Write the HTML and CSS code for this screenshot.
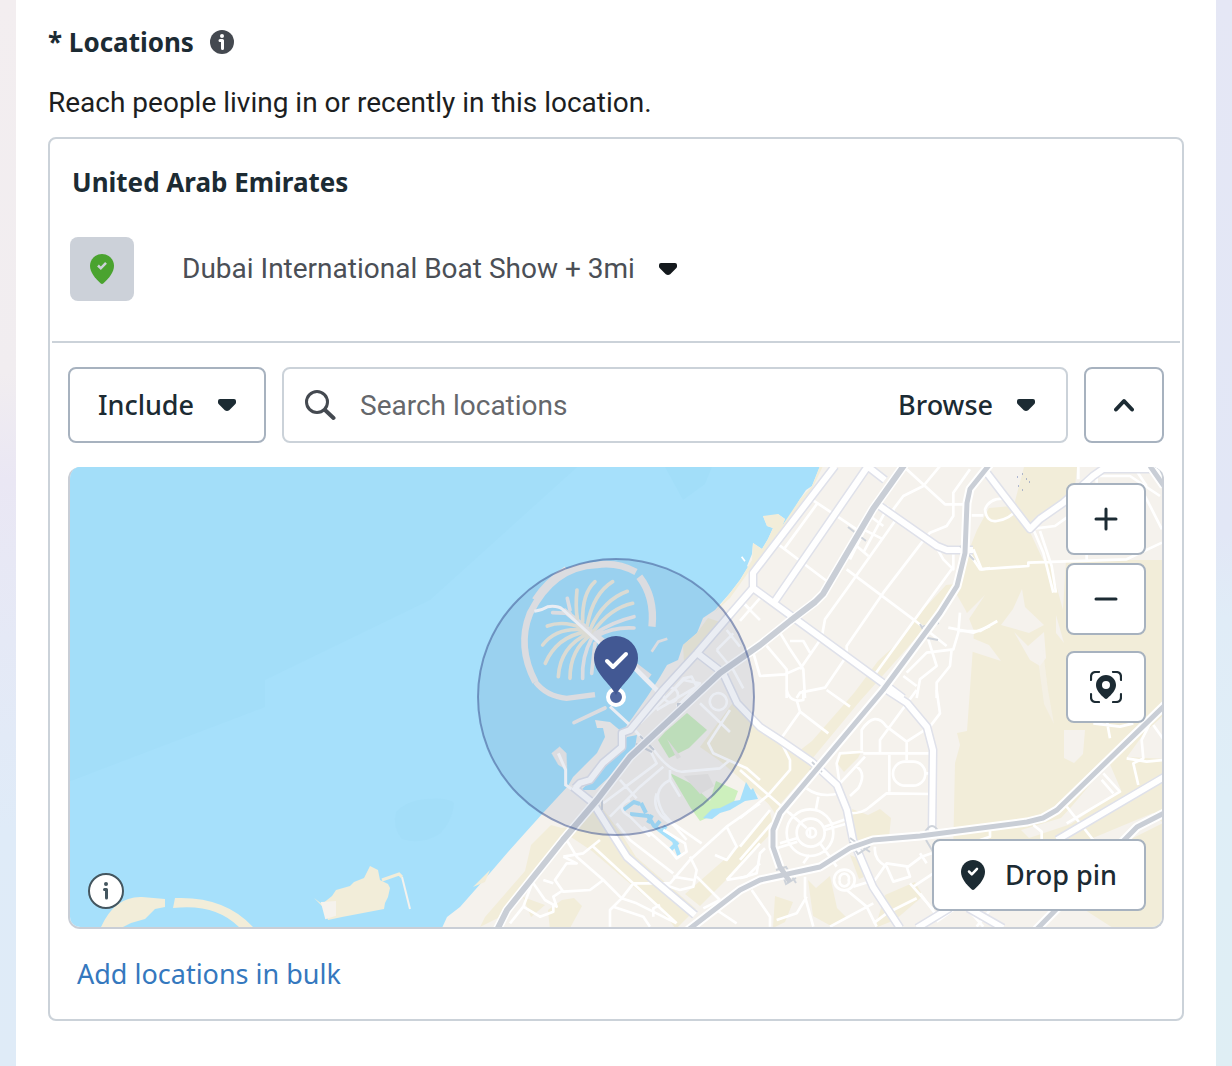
FILE: index.html
```html
<!DOCTYPE html>
<html lang="en">
<head>
<meta charset="utf-8">
<meta name="viewport" content="width=device-width, initial-scale=1">
<title>Locations</title>
<link rel="stylesheet" href="styles.css">
</head>
<body>
<main class="panel">
  <header class="heading">
    <h1 class="title">* Locations</h1>
    <button class="hint" type="button" aria-label="About locations">
      <svg width="24" height="24" viewBox="0 0 24 24" aria-hidden="true"><circle cx="12" cy="12" r="12" fill="#444950"/><circle cx="12" cy="6" r="2" fill="#fff"/><path d="M10 10.500h2.500v8" fill="none" stroke="#fff" stroke-width="3" stroke-linecap="round" stroke-linejoin="round"/></svg>
    </button>
  </header>
  <p class="intro">Reach people living in or recently in this location.</p>

  <section class="card">
    <div class="selected">
      <h2 class="country">United Arab Emirates</h2>
      <div class="place">
        <span class="place-mark">
          <svg width="24" height="30" viewBox="0 0 24 30" aria-hidden="true"><path d="M12 0C5.300 0 0 5.200 0 11.800 0 18.500 5 24 10.500 29.300q1.500 1.300 3 0C19 24 24 18.500 24 11.800 24 5.200 18.700 0 12 0z" fill="#4aa32f"/><path d="M8 11.500l2.800 2.800 5.200-5.500" fill="none" stroke="#ccd1d9" stroke-width="2.500"/></svg>
        </span>
        <button class="place-name" type="button">Dubai International Boat Show + 3mi
          <svg width="18" height="12" viewBox="0 0 18 12" aria-hidden="true"><path d="M2 0h14q2 0 2 2v1.500q0 .9-.6 1.500l-6.200 6.200q-2.200 1.600-4.400 0L.6 5Q0 4.400 0 3.500V2q0-2 2-2z" fill="#14191d"/></svg>
        </button>
      </div>
    </div>

    <div class="editor">
      <div class="controls">
        <button class="box include" type="button">Include
          <svg width="18" height="12" viewBox="0 0 18 12" aria-hidden="true"><path d="M2 0h14q2 0 2 2v1.500q0 .9-.6 1.500l-6.200 6.200q-2.200 1.600-4.400 0L.6 5Q0 4.400 0 3.500V2q0-2 2-2z" fill="#1c2b33"/></svg>
        </button>
        <div class="search">
          <svg width="32" height="32" viewBox="0 0 32 32" aria-hidden="true"><circle cx="13" cy="13" r="10.500" fill="none" stroke="#444950" stroke-width="3"/><path d="M21 21l8.500 8" stroke="#444950" stroke-width="4" stroke-linecap="round"/></svg>
          <input class="search-input" type="text" placeholder="Search locations" aria-label="Search locations">
          <button class="browse" type="button">Browse
            <svg width="18" height="12" viewBox="0 0 18 12" aria-hidden="true"><path d="M2 0h14q2 0 2 2v1.500q0 .9-.6 1.500l-6.200 6.200q-2.200 1.600-4.400 0L.6 5Q0 4.400 0 3.500V2q0-2 2-2z" fill="#1c2b33"/></svg>
          </button>
        </div>
        <button class="box collapse" type="button" aria-label="Hide map">
          <svg width="20" height="14" viewBox="0 0 20 14" aria-hidden="true"><path d="M2 11.500l8-8.500 8 8.500" fill="none" stroke="#1c2b33" stroke-width="4" stroke-linecap="round" stroke-linejoin="round"/></svg>
        </button>
      </div>

      <div class="map">
        <svg class="map-art" viewBox="70 467 1092 460" preserveAspectRatio="xMidYMid slice" role="img" aria-label="Map of Dubai coast">
          <rect x="0" y="400" width="1232" height="600" fill="#a6e0fb"/>
          <path d="M60 460H585L430 600 265 680V707L60 785z" fill="#a3def9"/>
          <path d="M665 467L683 500 705 484 712 467z" fill="#a2def9"/>
          <path d="M396 812q12-12 30-13 22-2 28 4-2 20-16 32-18 10-36 4-10-12-6-27z" fill="#a3def9"/>

          <!-- mainland -->
          <path d="M820 466L812 486 806 490 800 499 790 516 782 526 785 519 778 514 771 518 763 516 767 526 773 528 768 539 762 549 753 543 752 554 747 566 748 567 740 580 730 593 715 610 703 618 697 633 683 645 678 660 667 665 660 677 647 697 633 717 622 732 610 722 595 720 597 728 603 728 605 737 597 753 585 765 573 777 568 786 543 813 525 833 508 852 490 873 475 890 460 907 447 917 442 928H1170V460z" fill="#f5f2ed"/>
          <g fill="#f2edd9">
            <path d="M820 466L812 486 800 499 782 526 785 519 778 514 763 516 767 526 773 528 768 539 762 549 753 543 752 560 740 580 730 593 715 612 730 598 750 570 800 508 813 487 823 466z"/>
            <path d="M708 618L720 622 697 652 684 662 683 645 697 633z"/>
            <path d="M1024 467h53l-2 20-12 16-24 18-9 8-13-18-2-10z"/>
            <path d="M1012 506l18 26 13 28h125v368h-55l-70-45 60-30 60-30-10-10-60 25-20 12-120 8 2-95 5-18-3-12 10-2 5-70 2-30-8-20-9-16 8-35 12-30 12-22z"/>
            <path d="M965 583l-8 8-55 63-42 47-48 58-28 36-8 20-8-12-16-15 8-22 30-8 22-17 42-48 24-32 24-22 20-28 24-26z"/>
            <path d="M735 700l20 22 50 36 10 6-40 46-25-23-30-26-20-14z"/>
            <path d="M770 812l4 18-34 36-40 40-15-12 55-48z"/>
            <path d="M600 805l22 30 14 22 60 52-20 20-14-18-70-60-27-18z"/>
            <path d="M562 828l12-2-30 37-40 52-24 12 5-10 40-46 6-26 20-20z"/>
            <path d="M490 870l-5 12-12 5z"/>
            <path d="M548 910l14-10 12-2 8 8-12 22-20 2zM523 897l22 8-14 12z"/>
            <path d="M852 809l16 6 12-6 11 9-2 20-34 6zM808 880l8 8 14-12 7 32 10 10-16 8-18-10zM775 896l18 6-8 20-12 6zM850 855l10 4 4 18-5 2zM885 895l30-13 8 14-28 24-20 8z"/>
            <path d="M842 752l20-2-4 8-14 14-8-10z"/>
          </g>
          <g fill="#f5f2ed">
            <path d="M1022 589l3 18 19 18-15 8-28-8 12-16zM985 595l-22 22 4 5zM965 635l24 10 12 16-37-12-8-10zM1014 632l14 14 16-14 2 26-6 8-10-6z"/>
            <path d="M1036 524h128v22l-34 14h-64l-3 50-12-44zM1064 730h21l-2 24-9 9-10-5z"/>
            <path d="M1127 757l18-25 20-18v45zM1072 806l37-44 12 28-50 34-42 14-8-8 40-12z"/>
            <path d="M1065 505l28-36h70v66h-98l-30-10z"/>
            <path d="M1148 556l12-6-4 9zM1056 615l8 28-8-10z"/>
            <path d="M1043 650l5 40 6 34-10-20-6-44z" opacity=".6"/>
          </g>

          <!-- golf courses and water -->
          <path d="M687 713l20 17-18 18-20 10-11-18 7-8z" fill="#cdedbf"/>
          <path d="M670 773l20 10 20 18 6-20 22 10-6 16-32 14-10-14z" fill="#cdf0bd"/>
          <path d="M684 776l24-2 6 12-14 8zM667 739l14 18-4 2z" fill="#ece9e4"/>
          <path d="M746 782l5 8 2-2 5 11-13 2-15 9-10 3-8 6-9-1 9-9 8-1 14-7 6-1z" fill="#a6e0fb"/>
          <path d="M622 811l12-9 6 2M630 814l18 2 6 10 20 15 5 14M641 803l5 10M652 815l-4 8M660 821l-5 6M666 826l-5 6M678 842l-8 8" fill="none" stroke="#a6e0fb" stroke-width="4"/>
          <path d="M637 735l-10 2-12 20-24 24-10 9 14 0 24-22 16-20z" fill="#a6e0fb"/>

          <!-- islands -->
          <g fill="#f2edd9">
            <path d="M101 927q14-31 41-30l23 2v8l-10 2-10 10-14 4-8 4z"/>
            <path d="M175 898q50-2 78 29h-14q-24-24-66-19z"/>
            <path d="M314 898l8 6 10-8 4-6 14-4 4-4 10-4 6-12 8 4 2 10 8 4 2 4-2 9-3 6-1 6-42 8-14 3-4-12z"/>
          </g>
          <path d="M322 903l13-1v13l-9 3zM402 877l8 32" fill="#f5f2ed" stroke="#f5f2ed" stroke-width="2"/>
          <path d="M382 880l17-6 3 3" fill="none" stroke="#f2edd9" stroke-width="3"/>

          <!-- palm -->
          <g transform="translate(470 550) scale(.3333)" fill="none">
            <g stroke="#efecea">
              <path d="M196 396Q140 290 180 190Q250 50 380 45Q440 35 498 66" stroke-width="20"/>
              <path d="M196 396Q230 440 290 445L375 434" stroke-width="16"/>
              <path d="M508 80Q555 140 546 230" stroke-width="22"/>
              <path d="M195 150Q230 95 290 58" stroke-width="20"/>
              <path d="M280 180L350 235 540 380" stroke-width="16"/>
              <path d="M545 305L565 275 592 266" stroke-width="8"/>
              <path d="M245 610l24-20 20 20 2 50-26-16z" fill="#efecea"/>
            </g>
            <g stroke="#efebdc" stroke-width="11" stroke-linecap="round">
              <path d="M322 205Q316 170 321 120M338 215Q336 130 375 95M352 225Q370 130 428 95M362 235Q400 150 472 124M370 245Q420 175 488 160M340 235Q280 210 232 228M345 240Q260 230 218 285M350 245Q260 260 226 340M355 250Q270 290 265 380M362 255Q300 300 300 385"/>
              <path d="M375 250Q430 215 492 200M380 258Q430 230 492 234M365 265Q335 320 338 385M300 190L248 188M300 180L292 145M375 280L365 370M312 518L405 474" stroke="#efecea"/>
            </g>
            <path d="M193 184q24-4 40-14 30-4 45 8L400 290M420 470l65 60 50 55M265 610l22 50v45l30 20" stroke="#fff" stroke-width="9"/>
            <path d="M490 350l40 40 45 45" stroke="#fff" stroke-width="14"/>
            <path d="M815 20l10 14" stroke="#fff" stroke-width="5"/>
          </g>

          <!-- local streets -->
          <g fill="none" stroke="#fff" stroke-width="8" stroke-linejoin="round">
            <g transform="translate(470 550) scale(.3333)">
              <path d="M510 520L640 390 690 400 620 470M560 480L680 410 665 380 640 385 600 430M720 460a25 25 0 1 0 50-10 25 25 0 1 0-50 10M580 435a22 22 0 1 0 44 0 22 22 0 1 0-44 0M690 460L780 546M740 300l50 60 30 55M740 300l50-50M780 480L715 580 730 610 830 655 870 690M545 590Q600 670 640 665L750 655 780 630M600 660V690L630 740M600 690Q540 720 580 790L650 870M450 690l50 55M400 760l80-60 80-60-20-40M420 800l90-90 70-60M820 160l50 50M770 240l40 50"/>
            </g>
            <g transform="translate(740 466) scale(.3333)">
              <path d="M215 100L350 190M230 115L135 245M115 235L260 345M10 410L30 430M70 385L0 465M500 10L615 115 670 115M600 0L550 60 490 90 460 130 465 165 320 370 255 460 245 515 180 610M690 10L640 80V150L620 180 570 200 545 230 430 380 320 540V570L255 665 180 680 170 696M320 310L520 460 620 540M635 310L525 460 405 625M590 245L610 280 640 310V265M700 250L725 310 750 306M390 150L430 180M370 190L430 220M350 240L385 270M400 140L330 280M445 120L370 260M120 500L150 550 190 610 195 696M40 560L60 630 135 625 180 605M80 540L140 610 140 696M150 525h40L210 560M625 485L700 500 750 480M660 440L655 500 640 550 560 560 500 620M565 520L590 600 540 640 530 696M635 550L630 600 590 650V696M490 630L530 660"/>
            </g>
            <g transform="translate(960 466) scale(.3333)">
              <path d="M150 100Q90 90 75 130Q80 170 110 165Q150 160 170 130M35 148h35M205 190L285 180 320 155M220 190L250 260 280 380M240 195L275 300 288 380M30 265L60 310 205 300V290L500 280 606 230M355 0v40M410 50V30H510L600 90M555 90L606 190M380 280V265M0 495L60 495 112 465M520 0L560 60"/>
            </g>
            <g transform="translate(740 690) scale(.3333)">
              <path d="M140 0Q150 40 190 30V0M120 150L180 65 170 30M180 65L265 130M260 0L330 50M530 0L420 150V190M365 180V120Q405 60 440 110L500 155V210M500 155L570 110 600 70 590 0M370 190L575 190M370 185L300 190 290 220 300 290M375 200L300 280M350 230Q380 250 355 295 L330 318M448 195V305M330 370Q370 370 390 350L440 310 575 312M500 215h20a35 35 0 0 1 0 72h-25a35 35 0 0 1 0-72zM555 250h25M200 295Q240 325 300 310M120 150L150 210V240L85 315L0 385M0 240L200 415M0 470L90 360M0 510L95 400M235 320L228 358M208 495L190 520M120 460L170 445M254 410L325 385M110 475L172 455M254 420L325 400M210 442V414M240 460L290 530M150 370L200 415M140 428a70 70 0 1 0 140 0 70 70 0 1 0-140 0M170 428a42 42 0 1 0 84 0 42 42 0 1 0-84 0M200 428a14 14 0 1 0 28 0 14 14 0 1 0-28 0M0 565L50 550 60 490 75 475M282 570a30 30 0 1 0 62 0 30 30 0 1 0-62 0M300 570a14 14 0 1 0 26 0 14 14 0 1 0-26 0M320 600L380 650 410 710M340 590L405 570 440 520 505 530 545 500 575 490M405 470Q400 510 440 530L460 575 510 560 500 530M510 580L580 660M520 590L580 550M400 700L440 670 530 625M195 560V620L220 710M35 600L90 680V710M110 690L170 670 200 620M270 710L400 640"/>
            </g>
            <g transform="translate(920 720) scale(.3333)">
              <path d="M560 0L570 55M520 10L600 20 640 10M690 10L665 60 670 115 640 130 655 195M620 115L680 125 732 120M700 15L732 60M550 160L600 215 440 310M545 180L580 220M440 260L520 360M340 315L365 335V360M210 330V350L180 360M0 400L20 430M0 520L60 600M100 570L50 605M150 575L190 620M210 570L170 620"/>
            </g>
            <g transform="translate(430 780) scale(.3333)">
              <path d="M490 200L740 430M560 130L600 180 730 280M700 110L815 190M640 140L720 210 740 235 770 215 765 190 700 150M600 60Q550 80 600 110L660 170M680 40Q660 100 740 140M990 70L890 140 780 240 720 310 610 310 575 355M890 140L920 200 890 240 855 225M780 230L800 270 790 320 750 330 690 310M800 290L870 360M730 290L790 300M410 180L440 230 520 300 575 355 620 370 740 430M400 230L460 220 510 180M400 230L440 250 410 250 375 300 400 335 480 330 520 300M575 355L540 390V440M550 380L640 410 660 440M670 410V385L690 375M340 300L370 310M310 310L345 360 380 380 370 350 400 330M280 380L330 410 370 395V370M240 430L280 380 310 300 400 190M870 360L820 385M990 190L890 300M890 300L950 290 990 250M860 390L920 430"/>
            </g>
          </g>

          <!-- boulevards: casing, then surface -->
          <path fill="none" stroke="#dfe1ea" stroke-width="9" stroke-linejoin="round" d="M835 466L753 573V588L740 603 697 653 663 690 630 730 622 733V747L603 763 590 780 580 783 575 788M868 466L775 601M753 588L887 686 903 698M887 690L907 703 927 727 933 750 932 835M867 466L885 480M877 504L937 546 947 550H973M987 473L1003 494 1030 529 1040 519 1063 503 1093 476 1103 469H1162M697 653L723 673 737 703 760 727 780 740 812 762 837 785 847 810 853 840 873 887 900 928M573 787L593 803 613 835 627 857 657 883 695 915M1166 776L1057 840M917 928L950 908M968 908L1003 928"/>
          <path fill="none" stroke="#fff" stroke-width="6" stroke-linejoin="round" d="M835 466L753 573V588L740 603 697 653 663 690 630 730 622 733V747L603 763 590 780 580 783 575 788M868 466L775 601M753 588L887 686 903 698M887 690L907 703 927 727 933 750 932 835M867 466L885 480M877 504L937 546 947 550H973M987 473L1003 494 1030 529 1040 519 1063 503 1093 476 1103 469H1162M697 653L723 673 737 703 760 727 780 740 812 762 837 785 847 810 853 840 873 887 900 928M573 787L593 803 613 835 627 857 657 883 695 915M1166 776L1057 840M917 928L950 908M968 908L1003 928"/>

          <!-- junctions -->
          <path fill="none" stroke="#ced3da" stroke-width="2" d="M848 527l18 14M852 538l10-12M921 627l18-4M920 624l8 14 10 2M960 546l14 14M776 870l10-3 10 16M778 862l8 22 10-6M924 834q8-16 16 0M926 840l6 10 6-10M850 842l8 12 12-8M850 838l20 14M810 770l16-8M812 762l10 10M594 800l8-10v20M640 736l14 14M636 744l16 8M678 704h4v4h-4z"/>

          <!-- highways: edge, then surface -->
          <path fill="none" stroke="#fff" stroke-width="9" stroke-linejoin="round" d="M905 464L873 509 823 594 815 602 790 621 760 645 720 673 630 757 597 800 563 840 507 910 497 930M990 464L970 489 967 503 965 553 957 586 940 613 883 690 780 813 773 830V847L780 867M1166 704L1057 810 1043 818 1027 822 920 836 873 840 850 848 820 867 760 880 740 890 688 930M1166 812L1137 827 1036 930M1150 466l14 20"/>
          <path fill="none" stroke="#c9ced6" stroke-width="6" stroke-linejoin="round" d="M905 464L873 509 823 594 815 602 790 621 760 645 720 673 630 757 597 800 563 840 507 910 497 930"/>
          <path fill="none" stroke="#c9ced6" stroke-width="5" stroke-linejoin="round" d="M990 464L970 489 967 503 965 553 957 586 940 613 883 690 780 813 773 830V847L780 867 790 882M1166 704L1057 810 1043 818 1027 822 920 836 873 840 850 848 820 867 760 880 740 890 688 930M1166 812L1137 827 1036 930M1150 466l14 20"/>
          <path d="M1017 477h1M1022 474h1M1029 482h1M1018 486h1M1022 490h1M1026 479h1" stroke="#6a7fb8" stroke-width="1"/>

          <!-- targeting radius -->
          <circle cx="616" cy="697" r="138" fill="#425893" fill-opacity=".11" stroke="#425893" stroke-opacity=".55" stroke-width="2"/>
          <circle cx="616" cy="697" r="8" fill="#4f66a0" stroke="#fff" stroke-width="4"/>
          <path d="M616 695C609 682 594 673 594 658a22 22 0 0 1 44 0C638 673 623 682 616 695z" fill="#425893"/>
          <path d="M607 661l6 6 13-13" fill="none" stroke="#fff" stroke-width="4" stroke-linecap="round" stroke-linejoin="round"/>
        </svg>

        <button class="map-info" type="button" aria-label="Map information">
          <svg width="36" height="36" viewBox="0 0 36 36" aria-hidden="true"><circle cx="18" cy="18" r="17" fill="#fff" stroke="#44565f" stroke-width="2"/><circle cx="18" cy="11" r="2" fill="#44565f"/><path d="M16.500 16.500H18.500v8.500" fill="none" stroke="#44565f" stroke-width="3" stroke-linecap="round" stroke-linejoin="round"/></svg>
        </button>
        <div class="map-tools">
          <button class="box tool" type="button" aria-label="Zoom in">
            <svg width="24" height="24" viewBox="0 0 24 24" aria-hidden="true"><path d="M2 12h20M12 2v20" stroke="#1c2b33" stroke-width="3" stroke-linecap="round"/></svg>
          </button>
          <button class="box tool" type="button" aria-label="Zoom out">
            <svg width="24" height="24" viewBox="0 0 24 24" aria-hidden="true"><path d="M2 12h20" stroke="#1c2b33" stroke-width="3" stroke-linecap="round"/></svg>
          </button>
          <button class="box tool recenter" type="button" aria-label="Center on location">
            <svg width="32" height="32" viewBox="0 0 32 32" aria-hidden="true"><path d="M1 9V6q0-5 5-5h3M23 1h3q5 0 5 5v3M31 23v3q0 5-5 5h-3M9 31H6q-5 0-5-5v-3" fill="none" stroke="#1c2b33" stroke-width="2.200" stroke-linecap="round"/><path fill-rule="evenodd" d="M16 4C10.500 4 6 8.500 6 14c0 5.500 4.500 9.500 8.500 13.300q1.500 1.400 3 0C21.500 23.500 26 19.500 26 14 26 8.500 21.500 4 16 4zm0 6a4 4 0 1 1 0 8 4 4 0 0 1 0-8z" fill="#1c2b33"/></svg>
          </button>
        </div>
        <button class="box drop-pin" type="button">
          <svg width="24" height="30" viewBox="0 0 24 30" aria-hidden="true"><path d="M12 0C5.300 0 0 5.200 0 11.800 0 18.500 5 24 10.500 29.300q1.500 1.300 3 0C19 24 24 18.500 24 11.800 24 5.200 18.700 0 12 0z" fill="#1c2b33"/><path d="M8 11.500l2.800 2.800 5.200-5.500" fill="none" stroke="#fff" stroke-width="2.500" stroke-linecap="round" stroke-linejoin="round"/></svg>
          Drop pin
        </button>
      </div>

      <a class="bulk" href="#bulk">Add locations in bulk</a>
    </div>
  </section>
</main>
</body>
</html>
```
FILE: styles.css
```css
* { box-sizing: border-box; }

body {
  margin: 0;
  min-height: 100vh;
  padding: 0 16px;
  display: flex;
  background:
    linear-gradient(180deg, #f3eef0 0%, #f1edf0 35%, #eae7f4 45%, #e5e9f6 60%, #dfebf8 78%, #dfebf7 100%) left / 50% 100% no-repeat,
    linear-gradient(180deg, #e5e7f5 0%, #e2e7f6 50%, #e0ecf7 58%, #dfeef7 75%, #dfeef4 100%) right / 50% 100% no-repeat;
  font: 28px/36px Roboto, sans-serif;
  color: #1c1e21;
}

h1, h2, p { margin: 0; }

button, input {
  font: inherit;
  color: inherit;
  margin: 0;
  padding: 0;
  border: 0;
  background: none;
}

button { cursor: pointer; }
svg { display: block; flex: none; }

.panel {
  flex: 1;
  min-width: 0;
  padding: 24px 32px;
  background: #fff;
}

.heading {
  display: flex;
  align-items: center;
  gap: 16px;
}

.title, .country {
  font: 700 26px/36px "Noto Sans", sans-serif;
  color: #1c2b33;
}

.intro { margin: 25px 0 16px; }

.card {
  border: 2px solid #cbd2d9;
  border-radius: 8px;
}

.selected {
  margin: 0 2px;
  padding: 25px 20px 40px;
  border-bottom: 2px solid #cbd2d9;
}

.place {
  display: flex;
  align-items: center;
  gap: 48px;
  margin: 37px 0 0 -2px;
}

.place-mark {
  display: grid;
  place-items: center;
  width: 64px;
  height: 64px;
  border-radius: 8px;
  background: #ccd1d9;
}

.place-name {
  display: flex;
  align-items: center;
  gap: 24px;
  color: #4b4f56;
}

.editor { padding: 24px 18px 26px; }

.controls {
  display: flex;
  gap: 16px;
  height: 76px;
}

.box {
  display: flex;
  align-items: center;
  justify-content: center;
  border: 2px solid #a7b2bf;
  border-radius: 8px;
  background: #fff;
  font: 500 27px/36px "Noto Sans", sans-serif;
  color: #1c2b33;
}

.include { width: 198px; gap: 24px; }

.search {
  flex: 1;
  min-width: 0;
  display: flex;
  align-items: center;
  gap: 24px;
  padding: 0 31px 0 20px;
  border: 2px solid #cbd2d9;
  border-radius: 8px;
}

.search-input {
  flex: 1;
  min-width: 0;
  padding-top: 2px;
  outline: 0;
}

.search-input::placeholder { color: #65676b; opacity: 1; }

.browse {
  display: flex;
  align-items: center;
  gap: 24px;
  font: 500 27px/36px "Noto Sans", sans-serif;
  color: #1c2b33;
}

.collapse { width: 80px; }

.map {
  position: relative;
  margin-top: 24px;
  border: 2px solid #c9ced6;
  border-top: 0;
  border-radius: 12px;
  overflow: hidden;
}

.map-art { width: 100%; height: 460px; }

.map-info {
  position: absolute;
  left: 18px;
  bottom: 18px;
}

.map-tools {
  position: absolute;
  top: 16px;
  right: 16px;
  display: flex;
  flex-direction: column;
  gap: 8px;
}

.tool { width: 80px; height: 72px; }
.recenter { margin-top: 8px; }

.drop-pin {
  position: absolute;
  right: 16px;
  bottom: 16px;
  width: 214px;
  height: 72px;
  gap: 20px;
}

.bulk {
  display: inline-block;
  margin: 27px 0 0 9px;
  font: 400 27px/36px "Noto Sans", sans-serif;
  color: #3578be;
  text-decoration: none;
}
```
